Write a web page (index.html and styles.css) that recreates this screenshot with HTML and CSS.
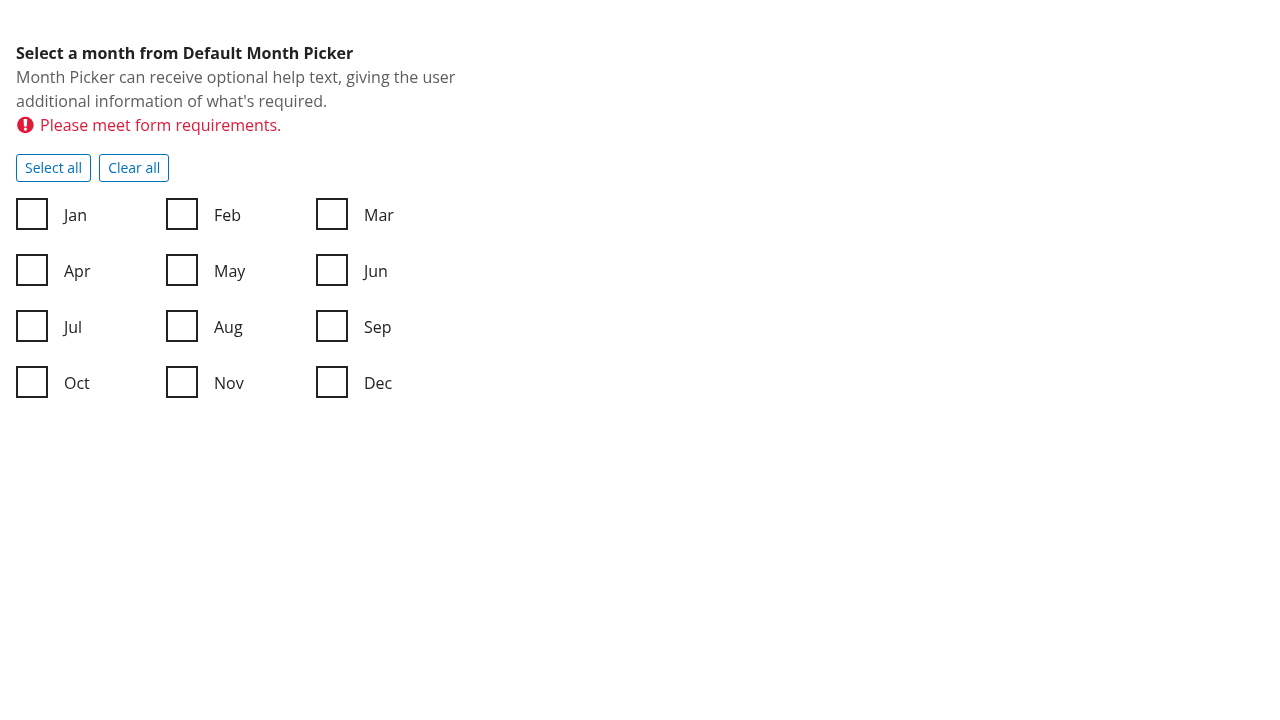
FILE: index.html
```html
<!DOCTYPE html>
<html lang="en">
<head>
<meta charset="utf-8">
<title>Month Picker</title>
<link rel="stylesheet" href="styles.css">
</head>
<body>
<fieldset class="month-picker">
  <legend class="label">Select a month from Default Month Picker</legend>
  <div class="hint">Month Picker can receive optional help text, giving the user additional information of what's required.</div>
  <div class="error">
    <svg class="error-icon" viewBox="-0.400 0 18 18" aria-hidden="true"><circle cx="9" cy="9" r="8.300" fill="currentColor"/><path fill="#fff" d="M7.200 3.700Q7.200 3.100 7.800 3.100H10.200Q10.800 3.100 10.800 3.700L10.500 10.100Q10.450 10.600 10 10.600H8Q7.550 10.600 7.500 10.100Z"/><circle cx="9" cy="13.100" r="1.600" fill="#fff"/></svg>
    <span>Please meet form requirements.</span>
  </div>
  <div class="actions">
    <button class="button" type="button">Select all</button>
    <button class="button" type="button">Clear all</button>
  </div>
  <div class="months">
    <label class="month"><input class="box" type="checkbox"><span>Jan</span></label>
    <label class="month"><input class="box" type="checkbox"><span>Feb</span></label>
    <label class="month"><input class="box" type="checkbox"><span>Mar</span></label>
    <label class="month"><input class="box" type="checkbox"><span>Apr</span></label>
    <label class="month"><input class="box" type="checkbox"><span>May</span></label>
    <label class="month"><input class="box" type="checkbox"><span>Jun</span></label>
    <label class="month"><input class="box" type="checkbox"><span>Jul</span></label>
    <label class="month"><input class="box" type="checkbox"><span>Aug</span></label>
    <label class="month"><input class="box" type="checkbox"><span>Sep</span></label>
    <label class="month"><input class="box" type="checkbox"><span>Oct</span></label>
    <label class="month"><input class="box" type="checkbox"><span>Nov</span></label>
    <label class="month"><input class="box" type="checkbox"><span>Dec</span></label>
  </div>
</fieldset>
</body>
</html>
```

FILE: styles.css
```css
body {
  margin: 0;
  padding: 41px 16px 16px;
  background: #fff;
  color: #222;
  font: 16px/24px "Open Sans", sans-serif;
}
.month-picker {
  width: 450px;
  margin: 0;
  padding: 0;
  border: 0;
  will-change: transform;
}
.label {
  padding: 0;
  font-weight: 700;
}
.hint {
  color: #5e5e5e;
}
.error {
  display: flex;
  align-items: center;
  gap: 6px;
  color: #e3193c;
}
.error-icon {
  width: 18px;
  height: 18px;
}
.actions {
  display: flex;
  gap: 8px;
  margin-top: 17px;
}
.button {
  height: 28px;
  padding: 0 8px;
  border: 1px solid #0072bc;
  border-radius: 3px;
  background: #fff;
  color: #0072bc;
  font: 14px/26px "Open Sans", sans-serif;
}
.months {
  display: grid;
  grid-template-columns: repeat(3, 150px);
  row-gap: 24px;
  margin-top: 16px;
}
.month {
  display: flex;
  height: 32px;
}
.month span {
  padding-top: 5px;
}
.box {
  appearance: none;
  box-sizing: border-box;
  width: 32px;
  height: 32px;
  margin: 0 16px 0 0;
  border: 2px solid #222;
  background: #fff;
}
```
